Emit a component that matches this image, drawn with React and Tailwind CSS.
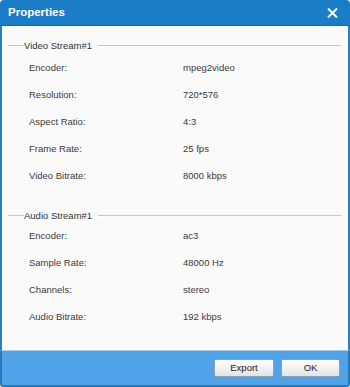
import React from 'react';

const video = [
  ['Encoder:', 'mpeg2video'],
  ['Resolution:', '720*576'],
  ['Aspect Ratio:', '4:3'],
  ['Frame Rate:', '25 fps'],
  ['Video Bitrate:', '8000 kbps'],
];

const audio = [
  ['Encoder:', 'ac3'],
  ['Sample Rate:', '48000 Hz'],
  ['Channels:', 'stereo'],
  ['Audio Bitrate:', '192 kbps'],
];

function Section({ title, rows, className, headerClass }) {
  return (
    <div className={className}>
      {/* group header with line */}
      <div className={`flex items-center pl-[6px] pr-[7px] ${headerClass}`}>
        <div className="w-[16px] border-t border-b border-t-[#c4c8cd] border-b-white" />
        <span className="text-[9.5px] text-[#333] leading-none">{title}</span>
        <div className="flex-1 ml-[6px] border-t border-b border-t-[#c4c8cd] border-b-white" />
      </div>
      {rows.map(([label, value]) => (
        <div key={label} className="flex items-center h-[27px] pl-[27px] text-[9.5px] text-[#3a3a3a] leading-none">
          <span className="w-[154px]">{label}</span>
          <span>{value}</span>
        </div>
      ))}
    </div>
  );
}

export default function App() {
  return (
    <div
      className="w-[350px] h-[387px] flex flex-col bg-white"
      style={{ fontFamily: '"Liberation Sans", Arial, sans-serif' }}
    >
      {/* Title bar */}
      <div className="h-[26px] shrink-0 flex items-center justify-between bg-[#1b7cc8] rounded-t-[4px] pl-[8px] pr-[12px] border-b border-[#1568ad]">
        <span className="text-white font-bold text-[11.5px] leading-none">Properties</span>
        <svg width="11" height="10" viewBox="0 0 11 10">
          <path d="M1 0.5 L10 9.5 M10 0.5 L1 9.5" stroke="white" strokeWidth="2" />
        </svg>
      </div>

      {/* Body */}
      <div className="flex-1 bg-[#fafafa] border-x-2 border-[#2a7ec2] pt-[12px]">
        <Section title="Video Stream#1" rows={video} headerClass="h-[16px]" />
        <Section title="Audio Stream#1" rows={audio} className="mt-[20px]" headerClass="h-[13px]" />
      </div>

      {/* Footer */}
      <div className="h-[37px] shrink-0 flex items-center justify-end gap-[7px] pr-[8px] bg-[#4fa3e6] border-x-2 border-b-2 border-[#2a77ba] border-t border-t-[#a9cbe8] rounded-b-[3px]">
        <button className="w-[60px] h-[18px] rounded-[2px] border border-[#8ea2b5] bg-gradient-to-b from-white to-[#e2e4e6] text-[9.5px] text-[#222] leading-none">
          Export
        </button>
        <button className="w-[59px] h-[18px] rounded-[2px] border border-[#8ea2b5] bg-gradient-to-b from-white to-[#e2e4e6] text-[9.5px] text-[#222] leading-none">
          OK
        </button>
      </div>
    </div>
  );
}
